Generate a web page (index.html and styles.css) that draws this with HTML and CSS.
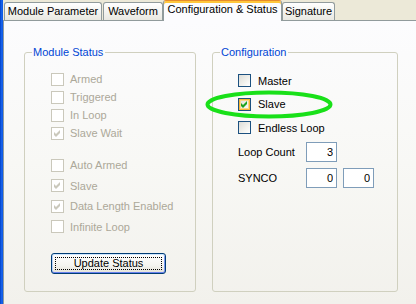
FILE: index.html
```html
<!DOCTYPE html>
<html lang="en">
<head>
    <meta charset="UTF-8">
    <title>Configuration &amp; Status</title>
    <link rel="stylesheet" href="styles.css">
</head>
<body>
    <div class="frame-edge"></div>
    <div class="dialog">
        <div class="tabs">
            <div class="tab tab-module">Module Parameter</div>
            <div class="tab tab-wave">Waveform</div>
            <div class="tab tab-active tab-config">Configuration &amp; Status</div>
            <div class="tab tab-sig">Signature</div>
        </div>
        <div class="panel">
            <fieldset class="group group-status">
                <legend>Module Status</legend>
                <div class="group-body">
                    <div class="check-list status-top">
                        <label class="check-row disabled"><span class="box"></span>Armed</label>
                        <label class="check-row disabled"><span class="box"></span>Triggered</label>
                        <label class="check-row disabled"><span class="box"></span>In Loop</label>
                        <label class="check-row disabled"><span class="box"><svg class="tick" viewBox="0 0 7 7"><polygon points="0,2 2,4 6,0 6,3 2,7 0,5"/></svg></span>Slave Wait</label>
                    </div>
                    <div class="check-list status-bottom">
                        <label class="check-row disabled"><span class="box"></span>Auto Armed</label>
                        <label class="check-row disabled"><span class="box"><svg class="tick" viewBox="0 0 7 7"><polygon points="0,2 2,4 6,0 6,3 2,7 0,5"/></svg></span>Slave</label>
                        <label class="check-row disabled"><span class="box"><svg class="tick" viewBox="0 0 7 7"><polygon points="0,2 2,4 6,0 6,3 2,7 0,5"/></svg></span>Data Length Enabled</label>
                        <label class="check-row disabled"><span class="box"></span>Infinite Loop</label>
                    </div>
                    <button class="xp-button"><span class="focus">Update Status</span></button>
                </div>
            </fieldset>
            <fieldset class="group group-config">
                <legend>Configuration</legend>
                <div class="group-body">
                    <div class="check-list config-checks">
                        <label class="check-row"><span class="box"></span>Master</label>
                        <label class="check-row"><span class="box hover"><svg class="tick" viewBox="0 0 7 7"><polygon points="0,2 2,4 6,0 6,3 2,7 0,5"/></svg></span>Slave
                            <svg class="highlight" width="128" height="29" viewBox="0 0 128 29"><ellipse cx="64" cy="14.5" rx="61.5" ry="12"/></svg>
                        </label>
                        <label class="check-row"><span class="box"></span>Endless Loop</label>
                    </div>
                    <div class="field-row loop-row">
                        <span class="field-label">Loop Count</span>
                        <input class="num" type="text" value="3" readonly>
                    </div>
                    <div class="field-row synco-row">
                        <span class="field-label">SYNCO</span>
                        <input class="num" type="text" value="0" readonly>
                        <input class="num" type="text" value="0" readonly>
                    </div>
                </div>
            </fieldset>
        </div>
    </div>
</body>
</html>
```

FILE: styles.css
```css
body {
    margin: 0;
    padding: 0;
    display: flex;
    height: 304px;
    overflow: hidden;
    font-family: "Liberation Sans", Arial, sans-serif;
    font-size: 11px;
    color: #000;
    background: #ECE9D8;
}
.frame-edge {
    width: 3px;
    background: linear-gradient(90deg, #0040C8, #1A66EE 60%, #0A55E0);
}
.dialog {
    flex: 1;
    display: flex;
    flex-direction: column;
    background: #ECE9D8;
}
.tabs {
    height: 20px;
    display: flex;
    align-items: flex-end;
    padding-left: 1px;
}
.tab {
    box-sizing: border-box;
    height: 18px;
    border: 1px solid #919B9C;
    border-bottom: none;
    border-radius: 3px 3px 0 0;
    background: linear-gradient(#FFFFFF, #F3F3EF 55%, #E9E8E1);
    text-align: center;
    line-height: 17px;
    white-space: nowrap;
}
.tab-module {
    width: 98px;
    margin-right: 1px;
}
.tab-wave {
    width: 60px;
}
.tab-config {
    width: 119px;
}
.tab-sig {
    width: 53px;
}
.tab-active {
    position: relative;
    z-index: 1;
    height: 21px;
    margin-bottom: -1px;
    border-top: 1px solid #E68B2C;
    box-shadow: inset 0 2px 0 #FFC73C;
    background: #FCFCFE;
    line-height: 16px;
}
.panel {
    flex: 1;
    display: flex;
    gap: 16px;
    padding: 25px 0 0 20px;
    border-top: 1px solid #919B9C;
    border-left: 1px solid #919B9C;
    background: linear-gradient(#FCFCFE, #F8F8F5 50%, #F2F1EC);
}
.group {
    box-sizing: border-box;
    height: 246px;
    margin: 0;
    padding: 0;
    border: 1px solid #D0D0BF;
    border-radius: 3px;
}
.group legend {
    margin-left: 7px;
    padding: 0 2px 0 1px;
    color: #0046D5;
    line-height: 13px;
}
.group-status {
    width: 172px;
}
.group-status .group-body {
    padding-left: 26px;
}
.group-config {
    width: 186px;
}
.group-config .group-body {
    padding-left: 25px;
}
.check-row {
    position: relative;
    display: flex;
    align-items: center;
    gap: 6px;
    white-space: nowrap;
}
.check-row.disabled {
    color: #ACA899;
}
.status-top {
    padding-top: 11px;
}
.status-top .check-row {
    height: 18px;
}
.status-bottom {
    margin-top: 13px;
}
.status-bottom .check-row {
    height: 20.5px;
}
.config-checks {
    padding-top: 10px;
}
.config-checks .check-row {
    height: 23.5px;
    gap: 7px;
}
.box {
    box-sizing: border-box;
    width: 13px;
    height: 13px;
    flex: none;
    display: flex;
    align-items: center;
    justify-content: center;
    border: 1px solid #1C5180;
    background: linear-gradient(135deg, #DCDCD7, #F2F2EE 60%, #FFFFFF);
}
.disabled .box {
    border-color: #CAC8BB;
    background: #FFFFFF;
}
.box.hover {
    box-shadow: inset 0 0 0 1px #F8B636, inset 0 0 0 2px #FDD889;
}
.tick {
    width: 7px;
    height: 7px;
    fill: #21A121;
}
.disabled .tick {
    fill: #CAC8BB;
}
.highlight {
    position: absolute;
    left: -33px;
    top: -3px;
    fill: none;
    stroke: #19E019;
    stroke-width: 4;
    pointer-events: none;
}
.xp-button {
    box-sizing: border-box;
    display: flex;
    padding: 3px;
    width: 115px;
    height: 21px;
    margin-top: 16px;
    border: 1px solid #003C74;
    border-radius: 3px;
    background: linear-gradient(#FFFFFF, #F4F4F0 60%, #E3E1D8);
    box-shadow: inset 0 1px 0 #CEE7FF, inset 0 -1px 0 #6982EE, inset 1px 0 0 #B9D1FA, inset -1px 0 0 #7D99F1;
    font-family: inherit;
    font-size: 11px;
    color: #000;
}
.xp-button .focus {
    flex: 1;
    border: 1px dotted #000;
    line-height: 11px;
    text-align: center;
}
.field-row {
    display: flex;
    align-items: center;
    gap: 6px;
    height: 20px;
}
.loop-row {
    margin-top: 2px;
}
.synco-row {
    margin-top: 6px;
}
.field-label {
    width: 62px;
}
.num {
    box-sizing: border-box;
    width: 31px;
    height: 20px;
    margin: 0;
    padding: 0 3px;
    border: 1px solid #7F9DB9;
    background: #FFFFFF;
    font-family: inherit;
    font-size: 11px;
    text-align: right;
    outline: none;
}
```
